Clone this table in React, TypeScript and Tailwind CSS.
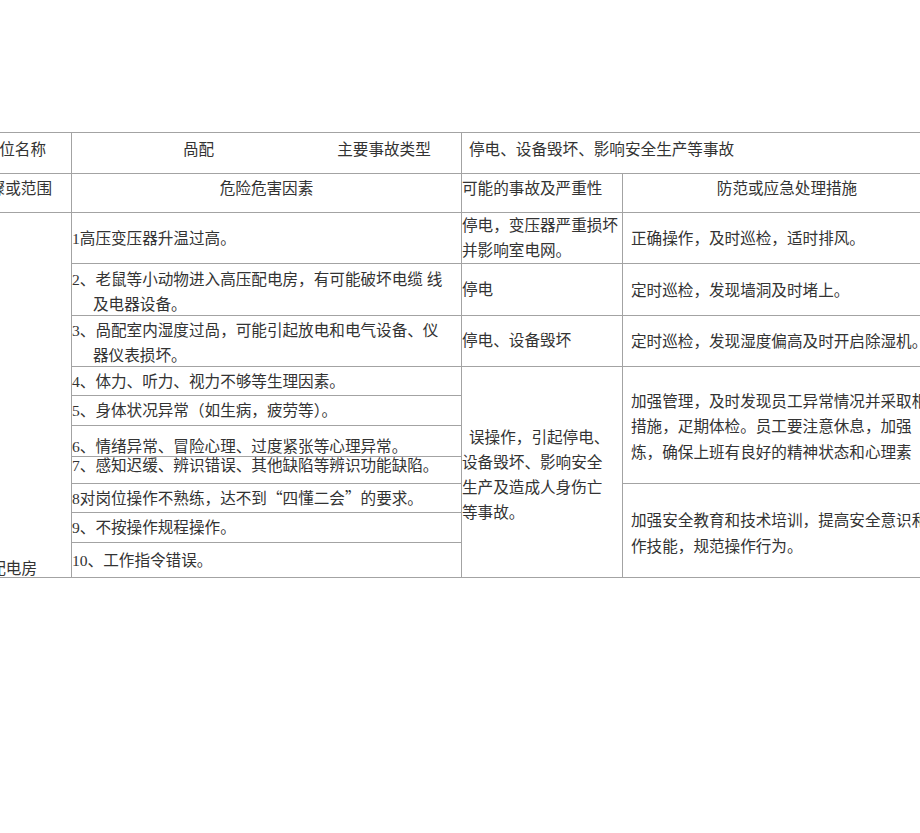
import React from "react";

const Q = ({ children }: { children: React.ReactNode }) => (
  <span className="font-['Noto_Sans_CJK_SC',sans-serif]">{children}</span>
);

export default function App() {
  return (
    <div className="w-[920px] h-[833px] overflow-hidden bg-white text-[#333] text-[15.6px] leading-[25px] font-['Liberation_Serif','Noto_Sans_CJK_SC',serif]">
      <div className="ml-[-41px] mt-[132px] w-fit grid grid-cols-[111px_389px_160px_328px] grid-rows-[40px_38px_50px_51px_50px_28px_29px_30px_26px_28px_29px_34px] gap-px p-px bg-[#a3a3a3] whitespace-nowrap">
        {/* Row 1 */}
        <div className="col-start-1 row-start-1 bg-white pt-[3.5px] pr-[25px] text-right">岗位名称</div>
        <div className="col-start-2 row-start-1 bg-white pt-[3.5px] pl-[111px] flex">
          <span>咼配</span>
          <span className="ml-[123px]">主要事故类型</span>
        </div>
        <div className="col-start-3 col-span-2 row-start-1 bg-white pt-[3.5px] pl-[7px]">
          停电、设备毁坏、影响安全生产等事故
        </div>

        {/* Row 2 */}
        <div className="col-start-1 row-start-2 bg-white pt-[1.5px] pr-[19px] text-right">步骤或范围</div>
        <div className="col-start-2 row-start-2 bg-white pt-[1.5px] text-center">危险危害因素</div>
        <div className="col-start-3 row-start-2 bg-white pt-[1.5px]">可能的事故及严重性</div>
        <div className="col-start-4 row-start-2 bg-white pt-[1.5px] text-center">防范或应急处理措施</div>

        {/* Col 0 merged */}
        <div className="col-start-1 row-start-3 row-span-10 bg-white pt-[342.5px] pr-[34px] text-right">配电房</div>

        {/* Row 3 */}
        <div className="col-start-2 row-start-3 bg-white pt-[12.5px]">1高压变压器升温过高。</div>
        <div className="col-start-3 row-start-3 bg-white">
          <div>停电，变压器严重损坏</div>
          <div>并影响室电网。</div>
        </div>
        <div className="col-start-4 row-start-3 bg-white pt-[12.5px] pl-[8px]">正确操作，及时巡检，适时排风。</div>

        {/* Row 4 */}
        <div className="col-start-2 row-start-4 bg-white pt-[2.5px]">
          <div>2、老鼠等小动物进入高压配电房，有可能破坏电缆 线</div>
          <div className="pl-[21px]">及电器设备。</div>
        </div>
        <div className="col-start-3 row-start-4 bg-white pt-[12.5px]">停电</div>
        <div className="col-start-4 row-start-4 bg-white pt-[13.5px] pl-[8px]">定时巡检，发现墙洞及时堵上。</div>

        {/* Row 5 */}
        <div className="col-start-2 row-start-5 bg-white pt-[1.5px]">
          <div>3、咼配室内湿度过咼，可能引起放电和电气设备、仪</div>
          <div className="pl-[21px]">器仪表损坏。</div>
        </div>
        <div className="col-start-3 row-start-5 bg-white pt-[11.5px]">停电、设备毁坏</div>
        <div className="col-start-4 row-start-5 bg-white pt-[12.5px] pl-[8px]">定时巡检，发现湿度偏高及时开启除湿机。</div>

        {/* Rows 6-12 col 1 */}
        <div className="col-start-2 row-start-6 bg-white pt-[1.5px]">4、体力、听力、视力不够等生理因素。</div>
        <div className="col-start-2 row-start-7 bg-white pt-[1.5px]">5、身体状况异常（如生病，疲劳等）。</div>
        <div className="col-start-2 row-start-8 bg-white pt-[7.5px]">6、情绪异常、冒险心理、过度紧张等心理异常。</div>
        <div className="col-start-2 row-start-9 bg-white leading-[18px]">7、感知迟缓、辨识错误、其他缺陷等辨识功能缺陷。</div>
        <div className="col-start-2 row-start-10 bg-white pt-[0.5px]">
          8对岗位操作不熟练，达不到<Q>“</Q>四懂二会<Q>”</Q>的要求。
        </div>
        <div className="col-start-2 row-start-11 bg-white pt-[1.5px]">9、不按操作规程操作。</div>
        <div className="col-start-2 row-start-12 bg-white pt-[4.5px]">10、工作指令错误。</div>

        {/* Col 2 merged */}
        <div className="col-start-3 row-start-6 row-span-7 bg-white pt-[57.5px]">
          <div className="pl-[7px]">误操作，引起停电、</div>
          <div>设备毁坏、影响安全</div>
          <div>生产及造成人身伤亡</div>
          <div>等事故。</div>
        </div>

        {/* Col 3 merged */}
        <div className="col-start-4 row-start-6 row-span-4 bg-white pt-[21.5px] pl-[8px] leading-[25.5px]">
          <div>加强管理，及时发现员工异常情况并采取相</div>
          <div>措施，疋期体检。员工要注意休息，加强</div>
          <div>炼，确保上班有良好的精神状态和心理素</div>
        </div>
        <div className="col-start-4 row-start-10 row-span-3 bg-white pt-[23.5px] pl-[8px] leading-[26px]">
          <div>加强安全教育和技术培训，提高安全意识和操</div>
          <div>作技能，规范操作行为。</div>
        </div>
      </div>
    </div>
  );
}
